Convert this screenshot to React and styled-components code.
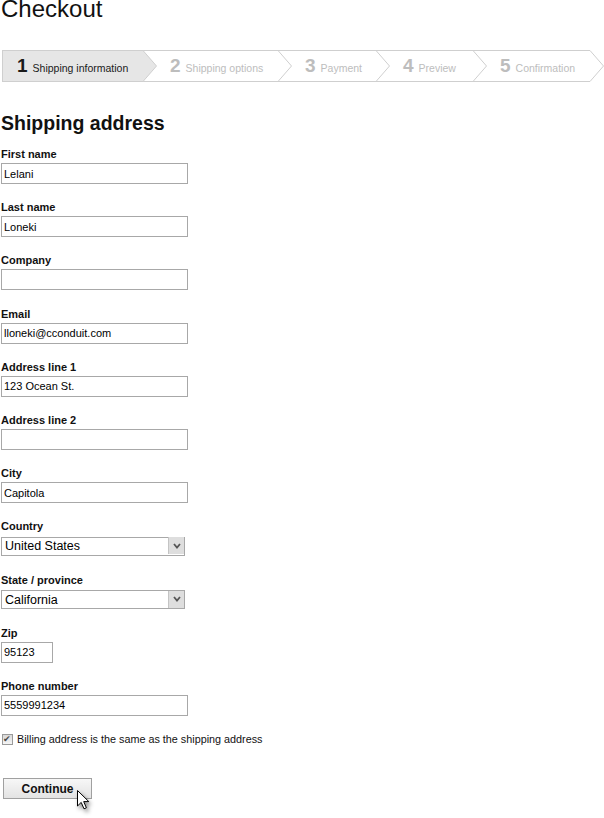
import React from "react";
import styled, { createGlobalStyle } from "styled-components";

const GlobalStyle = createGlobalStyle`
  html, body { margin: 0; padding: 0; background: #fff; }
  body { font-family: "Liberation Sans", Arial, sans-serif; color: #111; }
`;

const FONT = `"Liberation Sans", Arial, sans-serif`;

const Page = styled.div`
  padding: 0 0 0 1px;
  width: 603px;
  overflow: hidden;
`;

const Title = styled.h1`
  margin: 0;
  font-size: 24px;
  line-height: 18px;
  font-weight: normal;
  color: #111;
`;

const Steps = styled.ol`
  list-style: none;
  display: flex;
  margin: 32px 0 0 1px;
  padding: 0;
  height: 32px;
`;

const Step = styled.li`
  display: flex;
  align-items: center;
  box-sizing: border-box;
  height: 32px;
  width: ${(p) => p.$w}px;
  padding-left: ${(p) => (p.$first ? 14 : 13)}px;
  border-top: 1px solid #cfcfcf;
  border-bottom: 1px solid #cfcfcf;
  border-left: ${(p) => (p.$first ? "1px solid #cfcfcf" : "none")};
  background: ${(p) => (p.$active ? "#e6e6e6" : "#fff")};
  color: ${(p) => (p.$active ? "#1a1a1a" : "#bdbdbd")};
`;

const StepText = styled.span`
  display: flex;
  align-items: baseline;
`;

const StepNum = styled.span`
  font-size: 19px;
  font-weight: bold;
  margin-right: 5px;
`;

const StepLabel = styled.span`
  font-size: 10.5px;
`;

const ChevronSvg = styled.svg`
  display: block;
  flex: none;
`;

function Chevron({ active, last }) {
  return (
    <ChevronSvg width="14" height="32" viewBox="0 0 14 32">
      {!last && (
        <>
          <line x1="0" y1="0.5" x2="14" y2="0.5" stroke="#cfcfcf" />
          <line x1="0" y1="31.5" x2="14" y2="31.5" stroke="#cfcfcf" />
        </>
      )}
      <polyline
        points="0,0.5 13.5,16 0,31.5"
        fill={active ? "#e6e6e6" : "none"}
        stroke="#cfcfcf"
      />
    </ChevronSvg>
  );
}

const Heading = styled.h2`
  margin: 30px 0 0;
  font-size: 19.5px;
  line-height: 22px;
  font-weight: bold;
  color: #111;
`;

const Form = styled.form`
  margin-top: 13px;
  display: flex;
  flex-direction: column;
`;

const Field = styled.div`
  display: flex;
  flex-direction: column;
  align-items: flex-start;
  margin-bottom: 16.2px;
`;

const Label = styled.label`
  font-size: 11px;
  font-weight: bold;
  line-height: 14px;
  margin-bottom: 2px;
  color: #111;
`;

const TextInput = styled.input`
  box-sizing: border-box;
  width: ${(p) => p.$w || 187}px;
  height: 21px;
  margin: 0;
  border: 1px solid #a8a8a8;
  border-radius: 0;
  padding: 0 2px;
  font: 11px ${FONT};
  color: #000;
  background: #fff;
  outline: none;
`;

const SelectWrap = styled.div`
  position: relative;
  width: 184px;
  height: 19px;
  margin: 1px 0;
`;

const Select = styled.select`
  appearance: none;
  -webkit-appearance: none;
  box-sizing: border-box;
  width: 100%;
  height: 19px;
  margin: 0;
  border: 1px solid #a8a8a8;
  border-radius: 0;
  padding: 0 0 0 3px;
  font: 12.5px ${FONT};
  color: #000;
  background: #fff;
  outline: none;
`;

const SelectArrow = styled.span`
  position: absolute;
  top: 1px;
  right: 1px;
  width: 16px;
  height: 17px;
  box-sizing: border-box;
  background: #dedede;
  border-left: 1px solid #c4c4c4;
  display: flex;
  align-items: center;
  justify-content: center;
  pointer-events: none;
`;

const CheckRow = styled.label`
  display: flex;
  align-items: center;
  gap: 4px;
  font-size: 10.8px;
  line-height: 14px;
  color: #111;
`;

const Check = styled.input`
  appearance: none;
  -webkit-appearance: none;
  position: relative;
  box-sizing: border-box;
  margin: 0 0 0 1px;
  width: 11px;
  height: 11px;
  border: 1px solid #9a9a9a;
  border-radius: 0;
  background: linear-gradient(#d8d8d8, #f6f6f6);
  &:checked::after {
    content: "✔";
    position: absolute;
    left: 0px;
    top: -2px;
    font-size: 9px;
    line-height: 12px;
    color: #4a4a4a;
  }
`;

const Actions = styled.div`
  position: relative;
  margin-top: 32px;
  padding-left: 2px;
  height: 40px;
`;

const Button = styled.button`
  box-sizing: border-box;
  width: 89px;
  height: 21px;
  margin: 0;
  padding: 0;
  border: 1px solid #a0a0a0;
  border-radius: 0;
  background: linear-gradient(#f7f7f7, #e3e3e3);
  font: bold 12px ${FONT};
  color: #111;
`;

const Cursor = styled.svg`
  position: absolute;
  left: 75px;
  top: 11px;
  filter: drop-shadow(2px 3px 2px rgba(0, 0, 0, 0.45));
`;

const steps = [
  { n: 1, label: "Shipping information", w: 141 },
  { n: 2, label: "Shipping options", w: 121 },
  { n: 3, label: "Payment", w: 84 },
  { n: 4, label: "Preview", w: 83 },
  { n: 5, label: "Confirmation", w: 103 },
];

const fields = [
  { id: "first", label: "First name", value: "Lelani" },
  { id: "last", label: "Last name", value: "Loneki" },
  { id: "company", label: "Company", value: "" },
  { id: "email", label: "Email", value: "lloneki@cconduit.com" },
  { id: "addr1", label: "Address line 1", value: "123 Ocean St." },
  { id: "addr2", label: "Address line 2", value: "" },
  { id: "city", label: "City", value: "Capitola" },
  { id: "country", label: "Country", select: ["United States", "Canada", "Mexico"] },
  { id: "state", label: "State / province", select: ["California", "Oregon", "Washington"] },
  { id: "zip", label: "Zip", value: "95123", w: 52 },
  { id: "phone", label: "Phone number", value: "5559991234" },
];

export default function App() {
  return (
    <Page>
      <GlobalStyle />
      <Title>Checkout</Title>
      <Steps>
        {steps.map((s, i) => (
          <React.Fragment key={s.n}>
            <Step $w={s.w} $first={i === 0} $active={i === 0}>
              <StepText>
                <StepNum>{s.n}</StepNum>
                <StepLabel>{s.label}</StepLabel>
              </StepText>
            </Step>
            <Chevron active={i === 0} last={i === steps.length - 1} />
          </React.Fragment>
        ))}
      </Steps>
      <Heading>Shipping address</Heading>
      <Form onSubmit={(e) => e.preventDefault()}>
        {fields.map((f) => (
          <Field key={f.id}>
            <Label htmlFor={f.id}>{f.label}</Label>
            {f.select ? (
              <SelectWrap>
                <Select id={f.id} defaultValue={f.select[0]}>
                  {f.select.map((o) => (
                    <option key={o}>{o}</option>
                  ))}
                </Select>
                <SelectArrow>
                  <svg width="8" height="6" viewBox="0 0 8 6">
                    <polyline points="1,1 4,4.5 7,1" fill="none" stroke="#555" strokeWidth="1.8" />
                  </svg>
                </SelectArrow>
              </SelectWrap>
            ) : (
              <TextInput id={f.id} $w={f.w} defaultValue={f.value} />
            )}
          </Field>
        ))}
        <CheckRow>
          <Check type="checkbox" defaultChecked />
          Billing address is the same as the shipping address
        </CheckRow>
        <Actions>
          <Button type="submit">Continue</Button>
          <Cursor width="16" height="22" viewBox="0 0 16 22">
            <path
              d="M1.5,1.5 L1.5,17 L5.2,13.4 L8,19.8 L10.4,18.8 L7.7,12.6 L12.8,12.6 Z"
              fill="#fff"
              stroke="#000"
              strokeWidth="1"
              strokeLinejoin="miter"
            />
          </Cursor>
        </Actions>
      </Form>
    </Page>
  );
}
